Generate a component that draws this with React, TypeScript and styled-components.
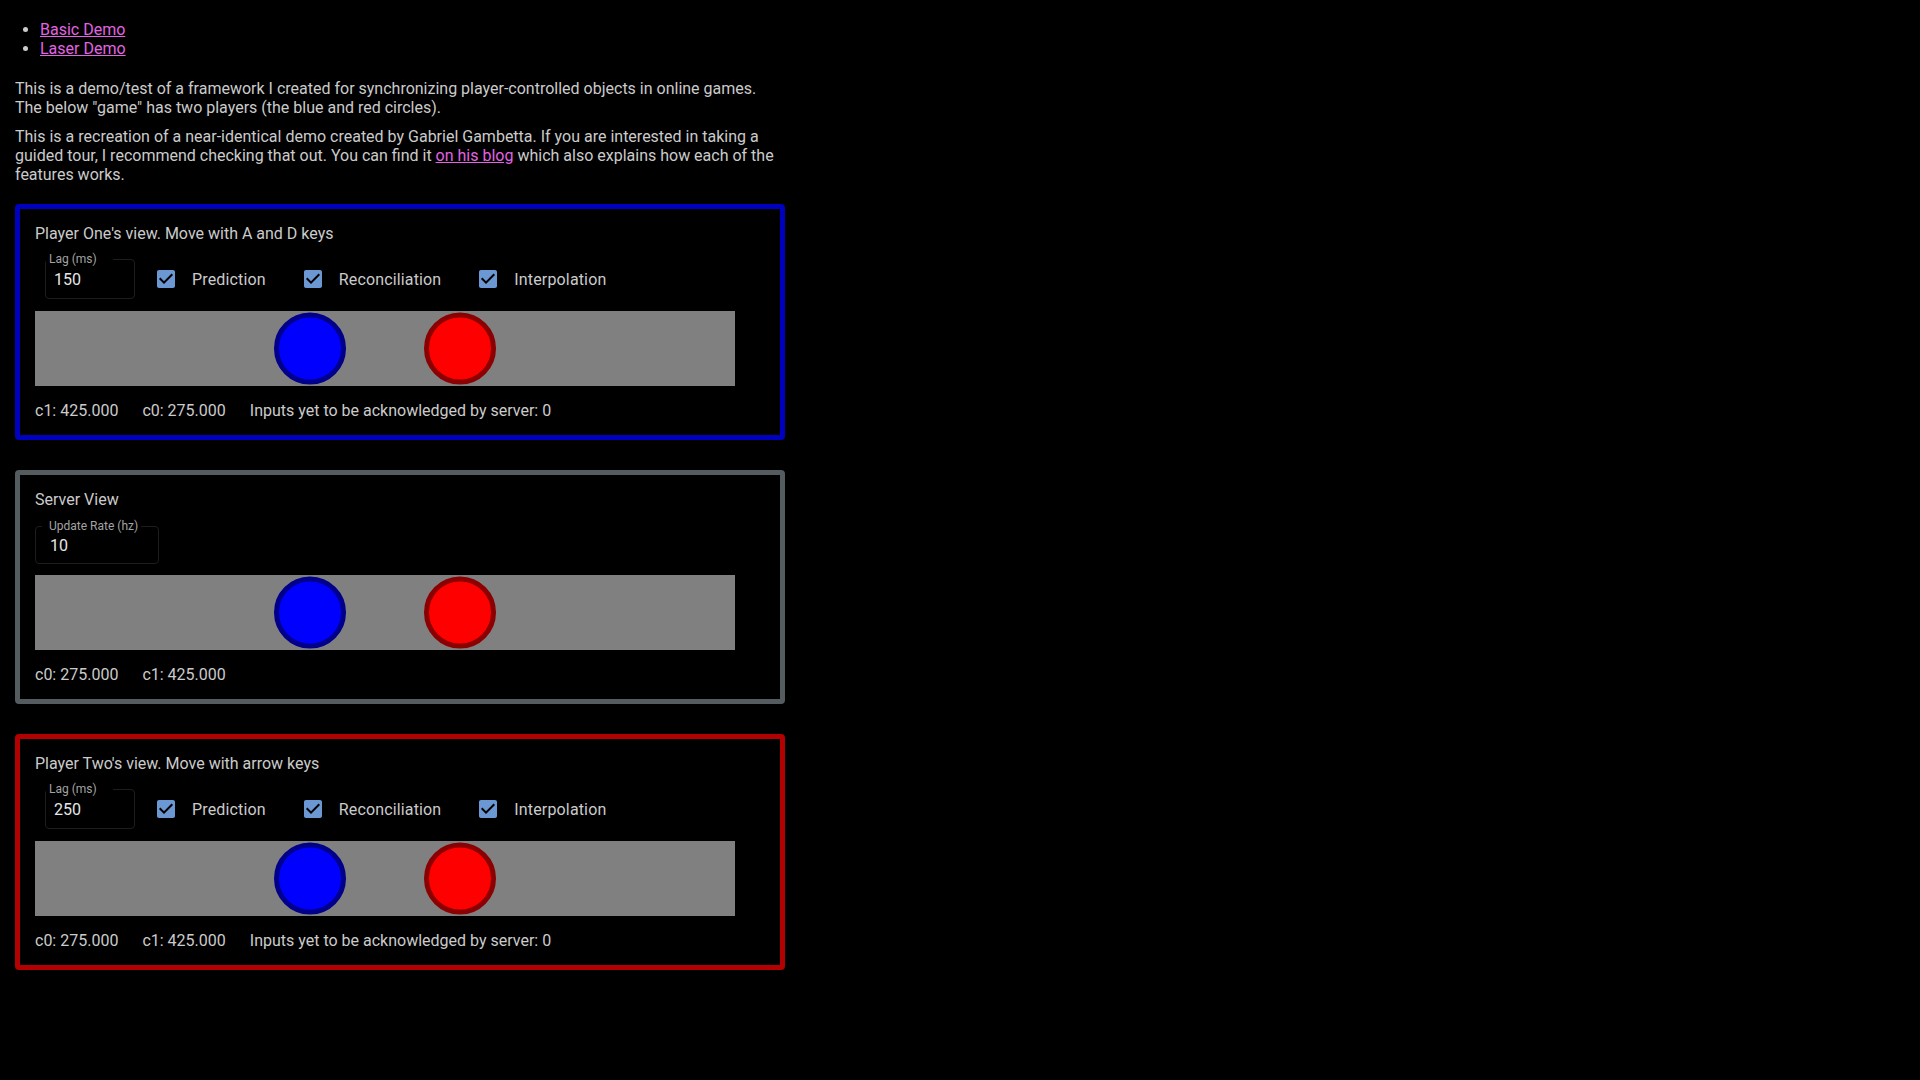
import React from "react";
import styled, { createGlobalStyle } from "styled-components";

const GlobalStyle = createGlobalStyle`
  html, body {
    margin: 0;
    padding: 0;
    background: #000;
  }
  body {
    font-family: Roboto, "Liberation Sans", Arial, sans-serif;
    font-size: 16px;
    color: #cbcbcb;
  }
`;

const Page = styled.div`
  width: 770px;
  margin-left: 15px;
  padding-bottom: 40px;
`;

const LinkList = styled.ul`
  margin: 20px 0 0;
  padding-left: 25px;
  line-height: 19px;
`;

const DemoLink = styled.a`
  color: #e264e2;
  text-decoration: underline;
`;

const Intro = styled.p<{ $top: number }>`
  margin: ${(p) => p.$top}px 0 0;
  line-height: 19px;
`;

const Panels = styled.div`
  display: flex;
  flex-direction: column;
  gap: 30px;
  margin-top: 20px;
`;

const Panel = styled.section<{ $border: string }>`
  box-sizing: border-box;
  width: 770px;
  border: 5px solid ${(p) => p.$border};
  border-radius: 4px;
  padding: 15px;
`;

const Title = styled.div`
  line-height: 19px;
  margin-bottom: 15px;
`;

const Controls = styled.div`
  display: flex;
  align-items: center;
  gap: 19px;
  min-height: 40px;
`;

const Field = styled.div<{ $width: number; $height: number; $offset: number; $top: number; $inset: number }>`
  position: relative;
  box-sizing: border-box;
  width: ${(p) => p.$width}px;
  height: ${(p) => p.$height}px;
  margin: ${(p) => p.$top}px 0 0 ${(p) => p.$offset}px;
  padding-left: ${(p) => p.$inset}px;
  border: 1px solid #1d1d1d;
  border-radius: 4px;
  display: flex;
  align-items: center;
  color: #e6e6e6;
  font-size: 16px;
`;

const FieldLabel = styled.span<{ $left: number; $padL: number; $padR: number }>`
  position: absolute;
  top: -8px;
  left: ${(p) => p.$left}px;
  padding: 0 ${(p) => p.$padR}px 0 ${(p) => p.$padL}px;
  background: #000;
  font-size: 12px;
  line-height: 14px;
  color: #a3a3a3;
  white-space: nowrap;
`;

const CheckItem = styled.label`
  display: flex;
  align-items: center;
  gap: 14px;
  height: 42px;
  letter-spacing: 0.15px;
  & + & {
    margin-left: 16px;
  }
`;

const CheckIcon = styled.svg`
  width: 24px;
  height: 24px;
  display: block;
  fill: #6b97d3;
`;

const Stage = styled.svg`
  display: block;
  margin-top: 11px;
  background: #808080;
`;

const Stats = styled.div`
  display: flex;
  gap: 24px;
  margin-top: 15px;
  line-height: 19px;
`;

const Check: React.FC<{ label: string }> = ({ label }) => (
  <CheckItem>
    <CheckIcon viewBox="0 0 24 24">
      <path d="M19 3H5c-1.11 0-2 .9-2 2v14c0 1.1.89 2 2 2h14c1.11 0 2-.9 2-2V5c0-1.1-.89-2-2-2zm-9 14l-5-5 1.41-1.41L10 14.17l7.59-7.59L19 8l-9 9z" />
    </CheckIcon>
    <span>{label}</span>
  </CheckItem>
);

const GameCanvas: React.FC = () => (
  <Stage width={700} height={75} viewBox="0 0 700 75">
    <circle cx={275} cy={37.5} r={33.5} fill="#0000ff" stroke="#00008b" strokeWidth={5} />
    <circle cx={425} cy={37.5} r={33.5} fill="#ff0000" stroke="#8b0000" strokeWidth={5} />
  </Stage>
);

type PlayerProps = {
  border: string;
  title: string;
  lag: string;
  stats: string[];
};

const PlayerPanel: React.FC<PlayerProps> = ({ border, title, lag, stats }) => (
  <Panel $border={border}>
    <Title>{title}</Title>
    <Controls>
      <Field $width={90} $height={40} $offset={10} $top={0} $inset={8}>
        <FieldLabel $left={0} $padL={3} $padR={16}>
          Lag (ms)
        </FieldLabel>
        {lag}
      </Field>
      <Check label="Prediction" />
      <Check label="Reconciliation" />
      <Check label="Interpolation" />
    </Controls>
    <GameCanvas />
    <Stats>
      {stats.map((s) => (
        <span key={s}>{s}</span>
      ))}
    </Stats>
  </Panel>
);

const ServerPanel: React.FC = () => (
  <Panel $border="#545c60">
    <Title>Server View</Title>
    <Controls>
      <Field $width={124} $height={38} $offset={0} $top={2} $inset={14}>
        <FieldLabel $left={6} $padL={7} $padR={3}>
          Update Rate (hz)
        </FieldLabel>
        10
      </Field>
    </Controls>
    <GameCanvas />
    <Stats>
      <span>c0: 275.000</span>
      <span>c1: 425.000</span>
    </Stats>
  </Panel>
);

export default function App() {
  return (
    <>
      <GlobalStyle />
      <Page>
        <LinkList>
          <li>
            <DemoLink href="#basic">Basic Demo</DemoLink>
          </li>
          <li>
            <DemoLink href="#laser">Laser Demo</DemoLink>
          </li>
        </LinkList>
        <Intro $top={21}>
          This is a demo/test of a framework I created for synchronizing player-controlled objects in online
          games. The below "game" has two players (the blue and red circles).
        </Intro>
        <Intro $top={10}>
          This is a recreation of a near-identical demo created by Gabriel Gambetta. If you are interested in
          taking a guided tour, I recommend checking that out. You can find it{" "}
          <DemoLink href="#blog">on his blog</DemoLink> which also explains how each of the features works.
        </Intro>
        <Panels>
          <PlayerPanel
            border="#0000bf"
            title="Player One's view. Move with A and D keys"
            lag="150"
            stats={["c1: 425.000", "c0: 275.000", "Inputs yet to be acknowledged by server: 0"]}
          />
          <ServerPanel />
          <PlayerPanel
            border="#b30000"
            title="Player Two's view. Move with arrow keys"
            lag="250"
            stats={["c0: 275.000", "c1: 425.000", "Inputs yet to be acknowledged by server: 0"]}
          />
        </Panels>
      </Page>
    </>
  );
}
